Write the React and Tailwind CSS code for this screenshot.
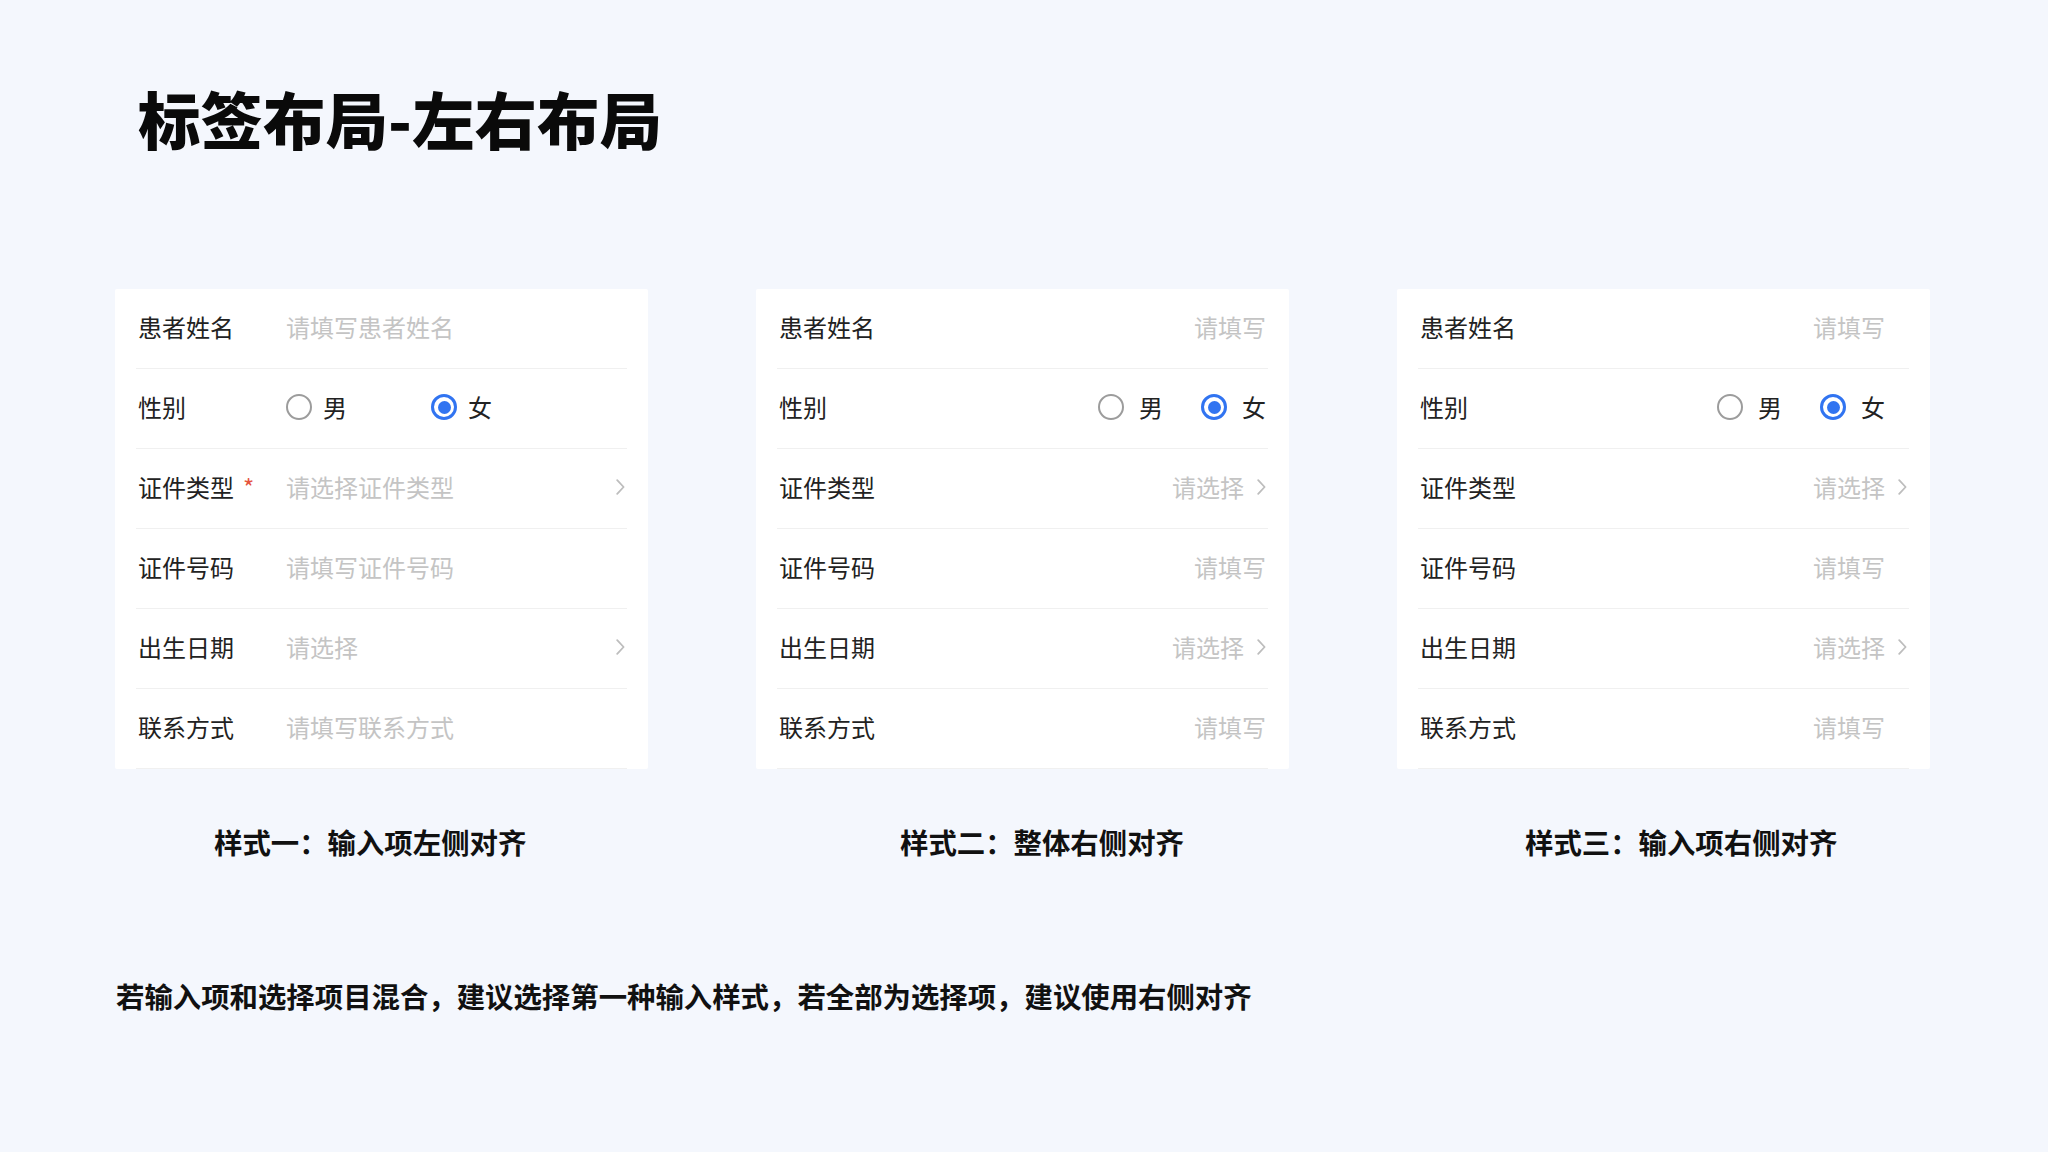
import { Fragment } from "react";

const fields = [
  { label: "患者姓名", type: "input", long: "请填写患者姓名" },
  { label: "性别", type: "radio" },
  { label: "证件类型", type: "select", long: "请选择证件类型", required: true },
  { label: "证件号码", type: "input", long: "请填写证件号码" },
  { label: "出生日期", type: "select", long: "请选择" },
  { label: "联系方式", type: "input", long: "请填写联系方式" },
];

const layouts = [
  { key: "left", caption: "样式一：输入项左侧对齐", captionPad: "pl-[99px]" },
  { key: "right", caption: "样式二：整体右侧对齐", captionPad: "pl-[144px]" },
  { key: "slot", caption: "样式三：输入项右侧对齐", captionPad: "pl-[128px]" },
];

function Chevron({ hidden }) {
  return (
    <svg
      width="9"
      height="16"
      viewBox="0 0 9 16"
      fill="none"
      className={`shrink-0 ${hidden ? "invisible" : ""}`}
    >
      <path d="M1.2 1.2L7.6 8L1.2 14.8" stroke="#bdbdbd" strokeWidth="1.8" strokeLinecap="round" strokeLinejoin="round" />
    </svg>
  );
}

function Radio({ checked, label, gap }) {
  return (
    <div className={`flex items-center ${gap}`}>
      {checked ? (
        <span className="w-[26px] h-[26px] rounded-full border-[3px] border-[#3174f1] flex items-center justify-center">
          <span className="w-[13px] h-[13px] rounded-full bg-[#3174f1]" />
        </span>
      ) : (
        <span className="w-[26px] h-[26px] rounded-full border-[2.5px] border-[#9c9c9c]" />
      )}
      <span className="text-[24px] leading-none text-[#222]">{label}</span>
    </div>
  );
}

function Row({ field, mode }) {
  const isLeft = mode === "left";

  let value;
  if (field.type === "radio") {
    value = isLeft ? (
      <div className="flex items-center">
        <div className="w-[145px]">
          <Radio label="男" gap="gap-[11px]" />
        </div>
        <Radio checked label="女" gap="gap-[11px]" />
      </div>
    ) : (
      <div className="flex items-center gap-[38px]">
        <Radio label="男" gap="gap-[15px]" />
        <Radio checked label="女" gap="gap-[15px]" />
      </div>
    );
  } else {
    const text = isLeft ? field.long : field.type === "select" ? "请选择" : "请填写";
    value = <span className="text-[24px] leading-none text-[#c4c4c4]">{text}</span>;
  }

  const isSelect = field.type === "select";

  return (
    <div className="h-[80px] border-b border-[#f0f0f0] flex items-center pl-[2px] pr-[2px] pb-[2px]">
      <div className={`flex items-center ${isLeft ? "w-[148px] shrink-0" : "flex-1"}`}>
        <span className="text-[24px] leading-none text-[#222]">{field.label}</span>
        {/* only the first style marks required fields */}
        {isLeft && field.required && (
          <span className="ml-[9px] text-[24px] leading-none text-[#e5533d]">*</span>
        )}
      </div>
      <div className={`flex items-center ${isLeft ? "flex-1" : ""}`}>{value}</div>
      {isLeft && isSelect && <Chevron />}
      {mode === "right" && isSelect && (
        <div className="ml-[13px] flex items-center">
          <Chevron />
        </div>
      )}
      {mode === "slot" && (
        <div className="ml-[13px] flex items-center">
          <Chevron hidden={!isSelect} />
        </div>
      )}
    </div>
  );
}

export default function App() {
  return (
    <div
      className="min-h-screen w-full bg-[#f4f7fd] pl-[115px] pt-[87px]"
      style={{ fontFamily: '"Noto Sans CJK SC", "Noto Sans", sans-serif' }}
    >
      <h1 className="pl-[23px] text-[62.5px] leading-none font-black text-[#0a0a0a]">标签布局-左右布局</h1>

      <div className="mt-[139px] flex gap-[108px]">
        {layouts.map((l) => (
          <div key={l.key} className="flex flex-col w-[533px]">
            <div className="bg-white rounded-[2px] px-[21px]">
              {fields.map((f) => (
                <Fragment key={f.label}>
                  <Row field={f} mode={l.key} />
                </Fragment>
              ))}
            </div>
            <p className={`mt-[59px] ${l.captionPad} text-[28.4px] leading-none font-bold text-[#111]`}>
              {l.caption}
            </p>
          </div>
        ))}
      </div>

      <p className="mt-[126px] pl-[1px] text-[28.4px] leading-none font-bold text-[#111]">
        若输入项和选择项目混合，建议选择第一种输入样式，若全部为选择项，建议使用右侧对齐
      </p>
    </div>
  );
}
